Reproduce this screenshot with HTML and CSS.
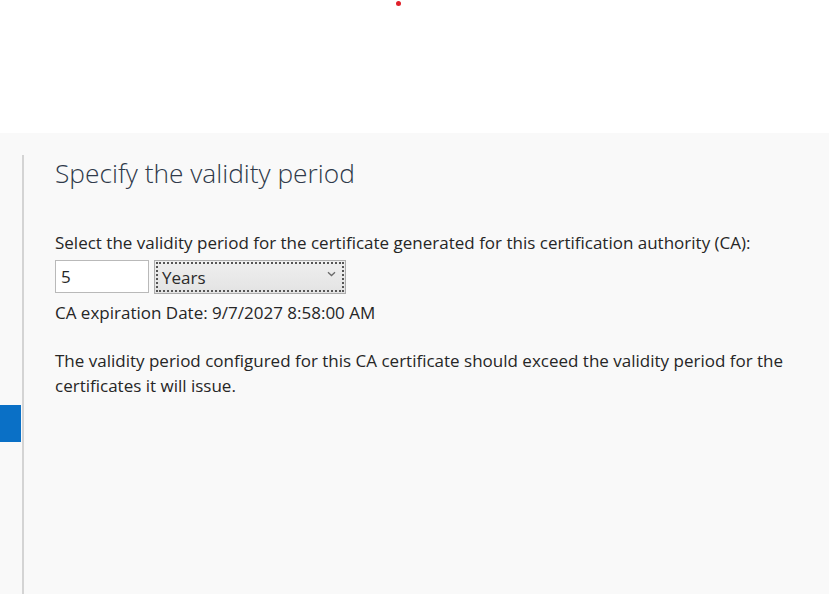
FILE: index.html
```html
<!DOCTYPE html>
<html>
<head>
<meta charset="utf-8">
<link rel="stylesheet" href="styles.css">
</head>
<body>
<div class="top">
  <span class="dot"></span>
</div>
<div class="panel">
  <div class="side">
    <div class="rail"></div>
    <div class="sel"></div>
  </div>
  <div class="content">
    <h1 class="title">Specify the validity period</h1>
    <p class="lead">Select the validity period for the certificate generated for this certification authority (CA):</p>
    <div class="controls">
      <div class="num">5</div>
      <div class="combo">
        <div class="focus">
          <span class="val">Years</span>
          <svg class="chev" width="9" height="6" viewBox="0 0 9 6"><path d="M1 1.2 L4.5 4.5 L8 1.2" fill="none" stroke="#6a6a6a" stroke-width="1.3"/></svg>
        </div>
      </div>
    </div>
    <p class="exp">CA expiration Date: 9/7/2027 8:58:00 AM</p>
    <p class="note">The validity period configured for this CA certificate should exceed the validity period for the certificates it will issue.</p>
  </div>
</div>
</body>
</html>
```
FILE: styles.css
```css
html, body {
  margin: 0;
  padding: 0;
  background: #ffffff;
  width: 829px;
  height: 594px;
  overflow: hidden;
  font-family: "Open Sans", "Noto Sans", sans-serif;
}
.top {
  height: 133px;
  position: relative;
}
.dot {
  position: absolute;
  left: 396px;
  top: 1px;
  width: 5px;
  height: 5px;
  border-radius: 50%;
  background: #e0202a;
}
.panel {
  height: 461px;
  background: #f9f9f9;
  display: flex;
}
.side {
  width: 24px;
  position: relative;
  flex: none;
}
.rail {
  position: absolute;
  left: 22px;
  top: 22px;
  bottom: 0;
  width: 2px;
  background: #d4d4d4;
}
.sel {
  position: absolute;
  left: 0;
  top: 272px;
  width: 21px;
  height: 37px;
  background: #0a70c6;
}
.content {
  padding-left: 31px;
  color: #262626;
}
.title {
  margin: 23px 0 0 0;
  font-weight: 300;
  font-size: 26.3px;
  line-height: 34px;
  color: #2f3a4a;
}
.lead {
  margin: 42px 0 0 0;
  font-size: 17px;
  line-height: 22px;
  white-space: nowrap;
}
.controls {
  display: flex;
  margin-top: 6px;
  gap: 5px;
}
.num {
  width: 87px;
  height: 31px;
  border: 1px solid #b9b9b9;
  background: #fff;
  font-size: 17px;
  line-height: 31px;
  padding-left: 5px;
  box-sizing: content-box;
}
.combo {
  width: 188px;
  height: 30px;
  border: 1px solid #acacac;
  background: linear-gradient(#efefef, #e3e3e3);
  padding: 1px;
}
.focus {
  height: 26px;
  border: 2px dotted #555;
  display: flex;
  align-items: center;
  justify-content: space-between;
  padding: 0 6px 0 4px;
}
.val {
  font-size: 17px;
  color: #2a2a2a;
}
.chev {
  margin-top: -6px;
}
.exp {
  margin: 8px 0 0 0;
  font-size: 17px;
  line-height: 22px;
}
.note {
  margin: 24px 0 0 0;
  font-size: 17px;
  line-height: 25px;
  width: 745px;
}
```
